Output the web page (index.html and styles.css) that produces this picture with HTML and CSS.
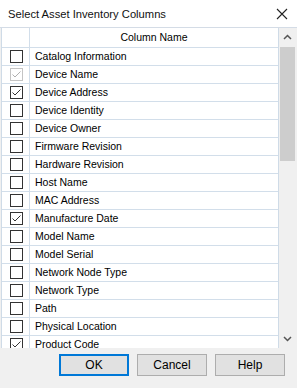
FILE: index.html
```html
<!DOCTYPE html>
<html>
<head>
<meta charset="utf-8">
<link rel="stylesheet" href="styles.css">
</head>
<body>
<div class="dialog">
  <div class="titlebar">
    <span class="title">Select Asset Inventory Columns</span>
    <svg class="close" width="12" height="12" viewBox="0 0 12 12"><path d="M1 1 L11 11 M11 1 L1 11" stroke="#222" stroke-width="1.1" fill="none"/></svg>
  </div>
  <div class="body">
    <div class="gridwrap">
      <div class="grid">
        <div class="row head"><div class="cc"></div><div class="nc">Column Name</div></div>
        <div class="row"><div class="cc"><span class="cb"></span></div><div class="nc">Catalog Information</div></div>
        <div class="row"><div class="cc"><span class="cb dis"><svg viewBox="0 0 13 13"><path d="M2.5 6.5 L5 9 L10.5 3.5" stroke="#b0b0b0" stroke-width="1" fill="none"/></svg></span></div><div class="nc">Device Name</div></div>
        <div class="row"><div class="cc"><span class="cb"><svg viewBox="0 0 13 13"><path d="M2.5 6.5 L5 9 L10.5 3.5" stroke="#333" stroke-width="1" fill="none"/></svg></span></div><div class="nc">Device Address</div></div>
        <div class="row"><div class="cc"><span class="cb"></span></div><div class="nc">Device Identity</div></div>
        <div class="row"><div class="cc"><span class="cb"></span></div><div class="nc">Device Owner</div></div>
        <div class="row"><div class="cc"><span class="cb"></span></div><div class="nc">Firmware Revision</div></div>
        <div class="row"><div class="cc"><span class="cb"></span></div><div class="nc">Hardware Revision</div></div>
        <div class="row"><div class="cc"><span class="cb"></span></div><div class="nc">Host Name</div></div>
        <div class="row"><div class="cc"><span class="cb"></span></div><div class="nc">MAC Address</div></div>
        <div class="row"><div class="cc"><span class="cb"><svg viewBox="0 0 13 13"><path d="M2.5 6.5 L5 9 L10.5 3.5" stroke="#333" stroke-width="1" fill="none"/></svg></span></div><div class="nc">Manufacture Date</div></div>
        <div class="row"><div class="cc"><span class="cb"></span></div><div class="nc">Model Name</div></div>
        <div class="row"><div class="cc"><span class="cb"></span></div><div class="nc">Model Serial</div></div>
        <div class="row"><div class="cc"><span class="cb"></span></div><div class="nc">Network Node Type</div></div>
        <div class="row"><div class="cc"><span class="cb"></span></div><div class="nc">Network Type</div></div>
        <div class="row"><div class="cc"><span class="cb"></span></div><div class="nc">Path</div></div>
        <div class="row"><div class="cc"><span class="cb"></span></div><div class="nc">Physical Location</div></div>
        <div class="row"><div class="cc"><span class="cb"><svg viewBox="0 0 13 13"><path d="M2.5 6.5 L5 9 L10.5 3.5" stroke="#333" stroke-width="1" fill="none"/></svg></span></div><div class="nc">Product Code</div></div>
      </div>
      <div class="scroll">
        <div class="arrow"><svg width="9" height="6" viewBox="0 0 9 6"><path d="M1 5 L4.5 1.5 L8 5" stroke="#555" stroke-width="1.5" fill="none"/></svg></div>
        <div class="track"><div class="thumb"></div></div>
        <div class="arrow"><svg width="9" height="6" viewBox="0 0 9 6"><path d="M1 1 L4.5 4.5 L8 1" stroke="#555" stroke-width="1.5" fill="none"/></svg></div>
      </div>
    </div>
    <div class="buttons">
      <button class="btn default">OK</button>
      <button class="btn">Cancel</button>
      <button class="btn">Help</button>
    </div>
  </div>
</div>
</body>
</html>
```

FILE: styles.css
```css
* { box-sizing: border-box; }
html, body { margin: 0; padding: 0; }
body {
  width: 297px;
  height: 388px;
  overflow: hidden;
  font-family: "Liberation Sans", Arial, sans-serif;
  font-size: 10.5px;
  color: #000;
  background: #f0f0f0;
}
.dialog { width: 297px; height: 388px; display: flex; flex-direction: column; }
.titlebar {
  height: 28px;
  background: #fff;
  border-bottom: 1px solid #d4dce6;
  display: flex;
  align-items: center;
  justify-content: space-between;
  padding: 0 9px 0 8px;
}
.title { font-size: 11.2px; color: #111; }
.close { display: block; }
.body { flex: 1; display: flex; flex-direction: column; }
.gridwrap {
  height: 320px;
  display: flex;
  margin: 0 1px 0 1px;
  background: #fff;
}
.grid {
  flex: 1;
  overflow: hidden;
  border-left: 1px solid #cfdbe7;
  border-right: 1px solid #cfdbe7;
}
.row {
  display: flex;
  height: 18px;
  border-bottom: 1px solid #d2deea;
}
.row.head { height: 20px; }
.cc {
  width: 28px;
  border-right: 1px solid #d2deea;
  display: flex;
  align-items: center;
  justify-content: center;
}
.nc {
  flex: 1;
  padding-left: 5px;
  line-height: 17px;
  white-space: nowrap;
}
.head .nc { text-align: center; padding-left: 0; line-height: 19px; }
.cb {
  width: 13px;
  height: 13px;
  border: 1px solid #333;
  background: #fff;
  display: block;
  position: relative;
  margin-left: 1px;
}
.cb svg { position: absolute; left: -1px; top: -1px; width: 13px; height: 13px; }
.cb.dis { border-color: #c4c4c4; }
.scroll {
  width: 17px;
  background: #f0f0f0;
  display: flex;
  flex-direction: column;
}
.arrow { height: 18px; display: flex; align-items: center; justify-content: center; }
.track { flex: 1; }
.thumb { margin: 1px 1px 0 1px; height: 114px; background: #cdcdcd; }
.buttons {
  display: flex;
  justify-content: flex-end;
  gap: 8px;
  padding: 6px 12px 0 0;
}
.btn {
  width: 70px;
  height: 22px;
  font-family: "Liberation Sans", Arial, sans-serif;
  font-size: 12px;
  color: #000;
  background: #e1e1e1;
  border: 1px solid #adadad;
  padding: 0;
}
.btn.default { border: 2px solid #0078d7; }
```
